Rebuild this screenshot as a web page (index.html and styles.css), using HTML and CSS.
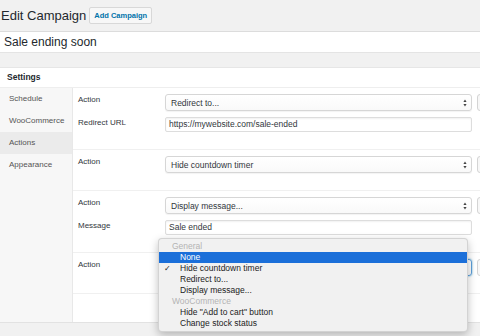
FILE: index.html
```html
<!DOCTYPE html>
<html lang="en">
<head>
  <meta charset="UTF-8">
  <title>Edit Campaign</title>
  <link rel="stylesheet" href="styles.css">
</head>
<body>
  <div class="heading">
    <h1>Edit Campaign</h1>
    <a class="add-btn">Add Campaign</a>
  </div>

  <div class="title-box">Sale ending soon</div>

  <div class="panel">
    <div class="panel-head">Settings</div>
    <div class="panel-body">
      <ul class="tabs">
        <li>Schedule</li>
        <li>WooCommerce</li>
        <li class="active">Actions</li>
        <li>Appearance</li>
      </ul>

      <div class="actions">
        <div class="action-row">
          <div class="field">
            <label>Action</label>
            <div class="select">Redirect to...<svg viewBox="0 0 4 8"><path d="M2 0.5 L3.6 3 H0.4Z M2 7.5 L3.6 5 H0.4Z"/></svg></div>
            <span class="remove"></span>
          </div>
          <div class="field">
            <label>Redirect URL</label>
            <div class="input">https://mywebsite.com/sale-ended</div>
          </div>
        </div>

        <div class="action-row">
          <div class="field">
            <label>Action</label>
            <div class="select">Hide countdown timer<svg viewBox="0 0 4 8"><path d="M2 0.5 L3.6 3 H0.4Z M2 7.5 L3.6 5 H0.4Z"/></svg></div>
            <span class="remove"></span>
          </div>
        </div>

        <div class="action-row">
          <div class="field">
            <label>Action</label>
            <div class="select">Display message...<svg viewBox="0 0 4 8"><path d="M2 0.5 L3.6 3 H0.4Z M2 7.5 L3.6 5 H0.4Z"/></svg></div>
            <span class="remove"></span>
          </div>
          <div class="field">
            <label>Message</label>
            <div class="input">Sale ended</div>
          </div>
        </div>

        <div class="action-row">
          <div class="field">
            <label>Action</label>
            <div class="select focused"><svg viewBox="0 0 4 8"><path d="M2 0.5 L3.6 3 H0.4Z M2 7.5 L3.6 5 H0.4Z"/></svg></div>
            <span class="remove"></span>
          </div>
        </div>
      </div>
    </div>
  </div>

  <div class="dropdown">
    <div class="group">General</div>
    <div class="opt selected">None</div>
    <div class="opt"><span class="check">✓</span>Hide countdown timer</div>
    <div class="opt">Redirect to...</div>
    <div class="opt">Display message...</div>
    <div class="group">WooCommerce</div>
    <div class="opt">Hide "Add to cart" button</div>
    <div class="opt">Change stock status</div>
  </div>
</body>
</html>
```

FILE: styles.css
```css
body {
  margin: 0;
  width: 480px;
  height: 336px;
  overflow: hidden;
  position: relative;
  background-color: #f1f1f1;
  font-family: "Liberation Sans", Arial, sans-serif;
  color: #23282d;
}
.heading {
  display: flex;
  align-items: center;
  gap: 3px;
  height: 31px;
}
h1 {
  margin: 0 0 0 1px;
  font-size: 13px;
  font-weight: normal;
}
.add-btn {
  box-sizing: border-box;
  height: 17px;
  line-height: 15px;
  padding: 0 4px;
  font-size: 7.5px;
  font-weight: bold;
  color: #0073aa;
  background-color: #f7f7f7;
  border: 1px solid #d8d8d8;
  border-radius: 2px;
}
.title-box {
  box-sizing: border-box;
  height: 22px;
  line-height: 20px;
  padding-left: 4px;
  font-size: 12px;
  background-color: white;
  border-top: 1px solid #dcdcdc;
  border-bottom: 1px solid #e4e4e4;
}
.panel {
  margin-top: 14px;
  background-color: white;
  border-top: 1px solid #e6e6e6;
  border-bottom: 1px solid #e2e2e2;
}
.panel-head {
  height: 19px;
  line-height: 19px;
  padding-left: 7px;
  font-size: 8.5px;
  font-weight: bold;
  border-bottom: 1px solid #eeeeee;
}
.panel-body {
  display: flex;
}
.tabs {
  box-sizing: border-box;
  flex: 0 0 73px;
  margin: 0;
  padding: 0;
  list-style: none;
  background-color: #f7f7f7;
  border-right: 1px solid #e8e8e8;
}
.tabs li {
  height: 22px;
  line-height: 22px;
  padding-left: 9px;
  font-size: 8px;
  color: #555;
  white-space: nowrap;
}
.tabs li.active {
  background-color: #ebebeb;
}
.actions {
  flex: 1;
  min-width: 0;
  padding-bottom: 28px;
}
.action-row {
  display: flex;
  flex-direction: column;
  gap: 6px;
  padding: 6px 0 17px 5px;
  border-bottom: 1px solid #f0f0f0;
}
.field {
  display: grid;
  grid-template-columns: 82px 307px 20px;
  column-gap: 5px;
  align-items: start;
}
.field label {
  font-size: 8px;
  line-height: 12px;
  color: #32373c;
}
.select {
  box-sizing: border-box;
  height: 17px;
  display: flex;
  align-items: center;
  padding: 0 4px 0 5px;
  font-size: 8.5px;
  color: #32373c;
  background: linear-gradient(#ffffff, #f9f9f9);
  border: 1px solid #d6d6d6;
  border-radius: 3px;
  box-shadow: 0 1px 1px rgba(0, 0, 0, 0.05);
}
.select svg {
  width: 4px;
  height: 8px;
  margin-left: auto;
  fill: #444;
}
.select.focused {
  border-color: #5b9dd9;
  box-shadow: 0 0 2px rgba(30, 140, 190, 0.8);
}
.input {
  box-sizing: border-box;
  height: 15px;
  line-height: 13px;
  padding-left: 3px;
  font-size: 8.5px;
  color: #32373c;
  border: 1px solid #dddddd;
  border-radius: 2px;
  box-shadow: inset 0 1px 2px rgba(0, 0, 0, 0.06);
}
.remove {
  box-sizing: border-box;
  height: 17px;
  background-color: #f7f7f7;
  border: 1px solid #d4d4d4;
  border-radius: 3px;
}
.dropdown {
  position: absolute;
  left: 158px;
  top: 238px;
  box-sizing: border-box;
  width: 310px;
  padding: 2px 0;
  background-color: #f1f1f1;
  border: 1px solid rgba(0, 0, 0, 0.12);
  border-radius: 4px;
  box-shadow: 0 3px 8px rgba(0, 0, 0, 0.25);
  font-size: 8.5px;
}
.group {
  height: 11px;
  line-height: 11px;
  padding-left: 13px;
  color: #b4b4b4;
}
.opt {
  position: relative;
  height: 11px;
  line-height: 11px;
  padding-left: 21px;
  color: #222;
}
.opt.selected {
  background-color: #1b6fd9;
  color: white;
}
.check {
  position: absolute;
  left: 5px;
  font-family: "DejaVu Sans", sans-serif;
  font-size: 8px;
}
```
